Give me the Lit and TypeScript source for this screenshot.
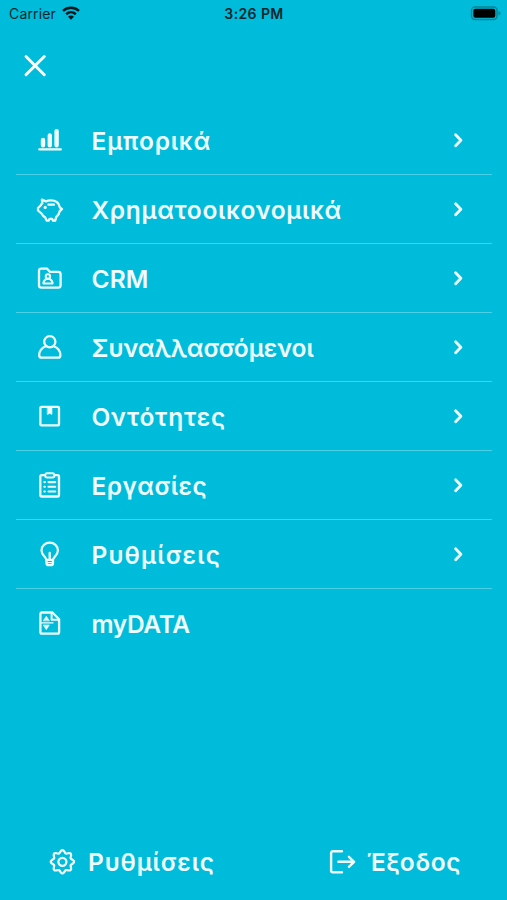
import { LitElement, html, css, svg } from "lit";
import { customElement } from "lit/decorators.js";
import { styleMap } from "lit/directives/style-map.js";

// Eight-lobed outline of the gear, sampled around its centre.
const gearOutline =
  "M" +
  Array.from({ length: 96 }, (_, i) => {
    const a = (i / 96) * Math.PI * 2;
    const r = 10.3 + 1.35 * Math.cos(8 * a);
    return `${(14.4 + r * Math.cos(a)).toFixed(2)} ${(13.8 + r * Math.sin(a)).toFixed(2)}`;
  }).join("L") +
  "Z";

const icons = {
  sales: svg`<path d="M3.2 23.4H24.8" stroke-width="2.2"/><path d="M7 19.2V13.9M13.8 19.2V9.5M20.6 19.2V5.1" stroke-width="4.4"/>`,
  piggy: svg`<path d="M5.9 4.6L10 6.4C12 5.2 18 4.9 20.5 6.8C22.6 8.2 23.4 10 23.8 12.3L26 14.2L23.8 16C23.3 18.6 22 20.6 20.2 22L19.2 25.6H17L16 23.8H13.6L12.6 25.6H10.6L9.3 22.6C7.3 21.4 6.3 20 5.5 18.5L2 15.5V13L4.6 10.5C5 9.5 5.6 9 6.3 8.4Z" stroke-width="2.3"/><path d="M12.4 9.7H18" stroke-width="2.2"/><circle cx="9.2" cy="12.4" r="1.6" fill="currentColor" stroke="none"/>`,
  crm: svg`<path d="M5.2 4.6H11L14 7.9H22.3Q24.6 7.9 24.6 10.2V21.2Q24.6 23.6 22.3 23.6H5.4Q3 23.6 3 21.2V6.8Q3 4.6 5.2 4.6Z" stroke-width="2.3"/><circle cx="11.9" cy="12.4" r="2.2" stroke-width="2"/><path d="M7.4 19.6C7.4 17 9 15.6 10.4 14.9H13.4C15 15.6 16.6 17 16.6 19.6Z" stroke-width="2"/>`,
  person: svg`<circle cx="13.8" cy="8.7" r="5.6" stroke-width="2.3"/><path d="M9.8 13.2C5.7 14.8 3.2 18.2 3.2 22.2Q3.2 24.7 5.6 24.7H22Q24.4 24.7 24.4 22.2C24.4 18.2 21.9 14.8 17.8 13.2" stroke-width="2.3"/>`,
  box: svg`<rect x="4.4" y="4.8" width="18.6" height="18.6" rx="1" stroke-width="2.3"/><path d="M11.6 4.8H16V12.4L13.8 11.4L11.6 12.4Z" fill="currentColor" stroke-width=".6"/>`,
  tasks: svg`<rect x="4.3" y="4.1" width="18.7" height="21.4" rx="1.4" stroke-width="2.3"/><rect x="9.2" y="2.2" width="9.2" height="4.2" rx="2" fill="#00bcdb" stroke-width="2"/><path d="M12.5 11.1H19.2M12.5 15.7H19.2M12.5 20.5H19.2" stroke-width="2.1"/><path d="M8.4 11.1h.5M8.4 15.7h.5M8.4 20.5h.5" stroke-width="2.1"/>`,
  bulb: svg`<path d="M10.3 19.8C10.3 17.1 5.5 15.1 5.5 10.4C5.5 5.9 9.2 2.7 13.7 2.7S21.9 5.9 21.9 10.4C21.9 15.1 17.1 17.1 17.1 19.8Z" stroke-width="2.2"/><path d="M10.5 20V22.9Q10.5 25.2 12.5 25.2H15Q17 25.2 17 22.9V20M13.7 19V13" stroke-width="2.3"/><path d="M11 22.6H16.5" stroke-width="1.2"/>`,
  mydata: svg`<path d="M5.6 3.5H16.4L23.1 10.2V23Q23.1 24.7 21.4 24.7H6.1Q4.4 24.7 4.4 23V4.9Q4.4 3.5 5.6 3.5Z" stroke-width="2.3"/><path d="M15.6 4V10.8H22.8" stroke-width="2"/><path d="M4.8 13.9H17" stroke-width="1.2"/><path d="M7.4 11.6L10.3 7.2L13.2 11.6ZM7.4 16.3L10.3 20.7L13.2 16.3Z" fill="currentColor" stroke-width=".6"/>`,
  gear: svg`<path d=${gearOutline} stroke-width="2.2"/><circle cx="14.4" cy="13.8" r="4" stroke-width="2.3"/>`,
  exit: svg`<path d="M14 3.3H4.8Q3.1 3.3 3.1 5V22.5Q3.1 24.2 4.8 24.2H14M10.4 13.8H26M20.9 8.8L26.1 13.8L20.9 18.8" stroke-width="2.4"/>`,
};

type IconName = keyof typeof icons;
const icon = (name: IconName) => html`<svg class="icon" viewBox="0 0 28 28">${icons[name]}</svg>`;

const label = (text: string, tracking: number) =>
  html`<span class="label" style=${styleMap({ letterSpacing: `${tracking}px` })}>${text}</span>`;

const items: { icon: IconName; label: string; tracking: number; arrow: boolean }[] = [
  { icon: "sales", label: "Εμπορικά", tracking: 0.8, arrow: true },
  { icon: "piggy", label: "Χρηματοοικονομικά", tracking: 0.67, arrow: true },
  { icon: "crm", label: "CRM", tracking: 0.1, arrow: true },
  { icon: "person", label: "Συναλλασσόμενοι", tracking: -0.03, arrow: true },
  { icon: "box", label: "Οντότητες", tracking: 0.75, arrow: true },
  { icon: "tasks", label: "Εργασίες", tracking: 0.45, arrow: true },
  { icon: "bulb", label: "Ρυθμίσεις", tracking: 1.15, arrow: true },
  { icon: "mydata", label: "myDATA", tracking: -0.35, arrow: false },
];

@customElement("app-root")
export class AppRoot extends LitElement {
  static styles = css`
    :host {
      display: flex;
      flex-direction: column;
      box-sizing: border-box;
      height: 900px;
      background: #00bcdb;
      color: #effdff;
      font-family: Inter, "Noto Sans", sans-serif;
    }
    svg {
      display: block;
      fill: none;
      stroke: currentColor;
      stroke-linecap: round;
      stroke-linejoin: round;
    }
    .status {
      display: grid;
      grid-template-columns: 1fr auto 1fr;
      align-items: center;
      height: 28px;
      padding: 0 6px 0 9px;
      color: #06262d;
      font-size: 14px;
      line-height: 28px;
    }
    .carrier { display: flex; align-items: center; gap: 5px; letter-spacing: 0.15px; }
    .wifi { width: 20px; height: 16px; color: #02171b; margin-top: -2px; }
    .time { font-weight: 600; font-size: 14px; letter-spacing: 0.4px; margin-right: 2px; }
    .battery { width: 31px; height: 16px; justify-self: end; margin-top: -2px; }
    .close { width: 26px; height: 26px; margin: 25px 0 27px 22px; color: #fff; }
    .menu { padding: 0 15px 0 16px; }
    .row {
      display: flex;
      align-items: center;
      box-sizing: border-box;
      height: 69px;
      padding: 0 27px 0 20px;
      border-bottom: 1px solid #4bd0e6;
    }
    .row:last-child { border-color: transparent; }
    .icon { width: 28px; height: 28px; flex: none; }
    .label { font-size: 24.5px; line-height: 32px; font-weight: 600; white-space: nowrap; }
    .row .label { margin-left: 27.5px; flex: 1; padding-top: 1px; }
    .arrow { width: 14px; height: 18px; }
    .footer {
      display: flex;
      justify-content: space-between;
      margin-top: auto;
      padding: 0 46px 22px 48px;
    }
    .action { display: flex; align-items: center; gap: 12px; }
    .action.exit { gap: 11px; }
  `;

  render() {
    return html`
      <div class="status">
        <div class="carrier">
          <span>Carrier</span>
          <svg class="wifi" viewBox="0 0 20 16">
            <path d="M2 5.8C6.6 1.6 13.4 1.6 18 5.8M5.2 9.2C8 6.7 12 6.7 14.8 9.2" stroke-width="2.5" stroke-linecap="butt"/>
            <path d="M10 14.8L7 11.7Q10 9.3 13 11.7Z" fill="currentColor" stroke="none"/>
          </svg>
        </div>
        <span class="time">3:26 PM</span>
        <svg class="battery" viewBox="0 0 31 16">
          <rect x="1.5" y="2" width="25.5" height="12.5" rx="3.5" stroke="#078294" stroke-width="1.4"/>
          <rect x="3.3" y="3.8" width="22" height="9" rx="2" fill="#000" stroke="none"/>
          <path d="M28.5 6Q30.5 6.5 30.5 8.2T28.5 10.5Z" fill="#078294" stroke="none"/>
        </svg>
      </div>
      <svg class="close" viewBox="0 0 26 26"><path d="M4 3.5L22.3 21.8M22.3 3.5L4 21.8" stroke-width="2.9"/></svg>
      <div class="menu">
        ${items.map(
          (item) => html`<div class="row">
            ${icon(item.icon)} ${label(item.label, item.tracking)}
            ${item.arrow
              ? html`<svg class="arrow" viewBox="0 0 14 18"><path d="M4.6 3.8L9.9 9.3L4.6 14.8" stroke-width="2.8"/></svg>`
              : null}
          </div>`
        )}
      </div>
      <div class="footer">
        <div class="action">${icon("gear")}${label("Ρυθμίσεις", 0.85)}</div>
        <div class="action exit">${icon("exit")}${label("Έξοδος", 0.6)}</div>
      </div>
    `;
  }
}
